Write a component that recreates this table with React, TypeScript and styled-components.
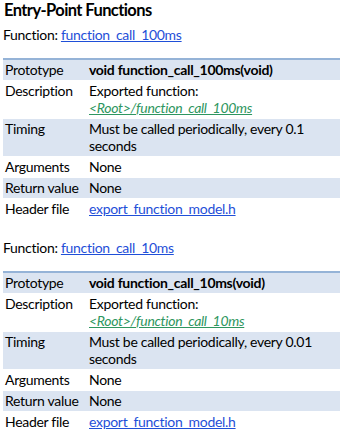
import styled, { createGlobalStyle } from "styled-components";

const GlobalStyle = createGlobalStyle`
    html, body { margin: 0; padding: 0; background: #ffffff; }
    body {
        font-family: Lato, "Open Sans", "Liberation Sans", sans-serif;
        color: #000000;
    }
`

const Page = styled.div`
    padding: 0 2px 0 3px;
    width: 342px;
    box-sizing: border-box;
`
const Title = styled.h2`
    font-size: 16.5px;
    font-weight: 700;
    letter-spacing: -0.6px;
    margin: 0 0 0 1px;
    line-height: 20px;
`
const FunctionLine = styled.p`
    font-size: 14px;
    letter-spacing: -0.3px;
    margin: 6px 0 15px 0;
    line-height: 17px;
`
const Link = styled.a`
    color: #1f4fd8;
    text-decoration: underline;
`
const ModelLink = styled.a`
    color: #2e9660;
    font-style: italic;
    text-decoration: underline;
`
const Table = styled.table`
    width: 100%;
    border-collapse: collapse;
    border-top: 2px solid #95b3d7;
    border-bottom: 1px solid #a7bfdd;
    font-size: 14px;
    letter-spacing: -0.3px;
    margin-bottom: 19px;
`
const Row = styled.tr<{ $shaded: boolean }>`
    background: ${p => p.$shaded ? "#dbe4f1" : "#ffffff"};
    border-bottom: 1px solid #ffffff;
`
const Label = styled.td`
    width: 84px;
    padding: 1px 0 2px 2px;
    vertical-align: top;
    line-height: 17px;
    white-space: nowrap;
`
const Value = styled.td<{ $bold?: boolean }>`
    padding: 1px 3px 2px 0;
    vertical-align: top;
    line-height: 17px;
    font-weight: ${p => p.$bold ? 700 : 400};
`

const entries = [
    { name: "function_call_100ms", period: "0.1" },
    { name: "function_call_10ms", period: "0.01" },
]

function App() {
    return (
        <Page>
            <GlobalStyle />
            <Title>Entry-Point Functions</Title>
            {entries.map(entry => (
                <div key={entry.name}>
                    <FunctionLine>Function: <Link href="#">{entry.name}</Link></FunctionLine>
                    <Table>
                        <tbody>
                            <Row $shaded>
                                <Label>Prototype</Label>
                                <Value $bold>void {entry.name}(void)</Value>
                            </Row>
                            <Row $shaded={false}>
                                <Label>Description</Label>
                                <Value>Exported function:<br /><ModelLink href="#">&lt;Root&gt;/{entry.name}</ModelLink></Value>
                            </Row>
                            <Row $shaded>
                                <Label>Timing</Label>
                                <Value>Must be called periodically, every {entry.period} seconds</Value>
                            </Row>
                            <Row $shaded={false}>
                                <Label>Arguments</Label>
                                <Value>None</Value>
                            </Row>
                            <Row $shaded>
                                <Label>Return value</Label>
                                <Value>None</Value>
                            </Row>
                            <Row $shaded={false}>
                                <Label>Header file</Label>
                                <Value><Link href="#">export_function_model.h</Link></Value>
                            </Row>
                        </tbody>
                    </Table>
                </div>
            ))}
        </Page>
    );
}

export default App;
